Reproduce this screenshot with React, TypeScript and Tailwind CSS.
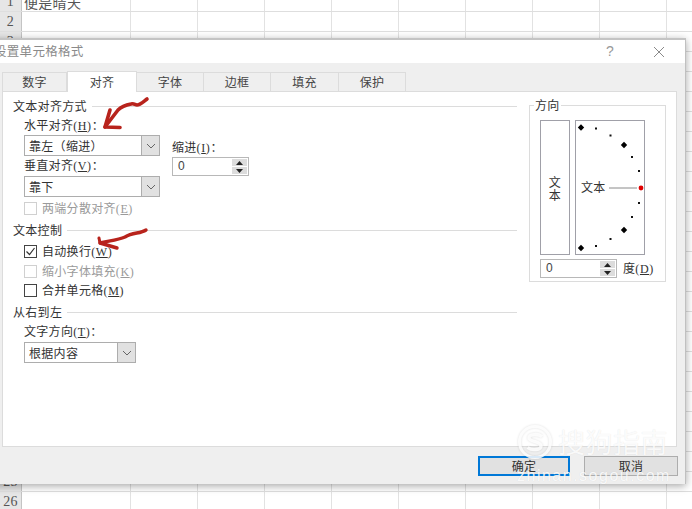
import React from "react";

const font = '"Noto Sans CJK SC","Liberation Sans",sans-serif';
const cols = [109, 67, 67, 67, 67, 67, 67, 67, 67, 67];

function Key({ k }: { k: string }) {
  return (
    <span className="font-['Liberation_Serif'] text-[12px] tracking-[0.6px]">
      (<span className="underline">{k}</span>)
    </span>
  );
}

function Chevron() {
  return (
    <svg width="10" height="6" viewBox="0 0 10 6" fill="none" stroke="#666" strokeWidth="1">
      <path d="M1 1l4 4 4-4" />
    </svg>
  );
}

function Select({ label, w, mt }: { label: string; w: string; mt: string }) {
  return (
    <div className={`${w} ${mt} h-[21px] flex border border-[#adadad] bg-white`}>
      <div className="flex-1 pl-[4px] leading-[19px]">{label}</div>
      <div className="w-[18px] flex items-center justify-center bg-[#e1e1e1] border-l border-[#adadad]">
        <Chevron />
      </div>
    </div>
  );
}

function Spin({ w }: { w: string }) {
  return (
    <div className={`${w} h-[19px] flex border border-[#b8b8b8] bg-white`}>
      <div className="flex-1 pl-[5px] leading-[17px] text-[#444] font-['Liberation_Sans']">0</div>
      <div className="w-[17px] flex flex-col gap-px bg-white p-px">
        <div className="flex-1 bg-[#dcdcdc] flex items-center justify-center">
          <svg width="7" height="4" viewBox="0 0 7 4"><path d="M3.5 0L7 4H0z" fill="#222" /></svg>
        </div>
        <div className="flex-1 bg-[#dcdcdc] flex items-center justify-center">
          <svg width="7" height="4" viewBox="0 0 7 4"><path d="M0 0h7L3.5 4z" fill="#222" /></svg>
        </div>
      </div>
    </div>
  );
}

function Check({ label, k, state, mt }: { label: string; k: string; state: "on" | "off" | "dis"; mt: string }) {
  return (
    <div className={`flex items-center h-[14px] ${mt} ${state === "dis" ? "text-[#9a9a9a]" : ""}`}>
      <div
        className={`w-[13px] h-[13px] border flex items-center justify-center bg-white ${
          state === "dis" ? "border-[#d0d0d0]" : "border-[#444]"
        }`}
      >
        {state === "on" && (
          <svg width="11" height="11" viewBox="0 0 11 11" fill="none" stroke="#333" strokeWidth="1.2">
            <path d="M1.5 5.5l3 3 5-6.5" />
          </svg>
        )}
      </div>
      <div className="ml-[5px] whitespace-nowrap">
        {label}
        <Key k={k} />
      </div>
    </div>
  );
}

function Section({ title, mt }: { title: string; mt: string }) {
  return (
    <div className={`flex items-center h-[16px] ${mt}`}>
      <span className="whitespace-nowrap">{title}</span>
      <div className="flex-1 ml-[5px] h-px bg-[#dcdcdc]" />
    </div>
  );
}

const big: [number, number][] = [[6, 7.5], [49, 25], [49, 110], [6, 128]];
const small: [number, number][] = [
  [21, 8.5], [35.5, 15.5], [57, 37], [64, 51], [64, 83], [57, 97], [35.5, 119], [21, 126],
];

export default function App() {
  return (
    <div
      className="relative w-[692px] h-[509px] overflow-hidden bg-white text-[12px] tracking-[0.3px] text-[#333]"
      style={{ fontFamily: font }}
    >
      {/* sheet */}
      <div className="-mt-[8px]">
        {Array.from({ length: 26 }, (_, i) => (
          <div key={i} className="flex h-[20px] border-b border-[#dedede]">
            <div className="w-[22px] shrink-0 bg-[#e6e6e6] border-r border-[#c4c4c4] text-center text-[14px] leading-[20px] text-[#555] font-['Liberation_Serif']">
              {i + 1}
            </div>
            {cols.map((w, c) => (
              <div
                key={c}
                style={{ width: w }}
                className="shrink-0 border-r border-[#e2e2e2] pl-[2px] text-[14px] leading-[20px] text-[#555] whitespace-nowrap"
              >
                {i === 0 && c === 0 ? "便是晴天" : ""}
              </div>
            ))}
          </div>
        ))}
      </div>

      {/* dialog */}
      <div className="absolute left-[-10px] top-[38px] w-[696px] h-[446px] flex flex-col bg-[#efefef] border-t-2 border-[#c4c4c4] border-r border-r-[#c0c0c0] shadow-[0_2px_8px_rgba(0,0,0,0.35)]">
        <div className="h-[23px] shrink-0 bg-white flex items-center text-[#8a8a8a] pr-[20px] pl-[4px]">
          <span className="flex-1 text-[12.5px]">设置单元格格式</span>
          <span className="text-[14px] text-[#999] mr-[39px] font-['Liberation_Sans']">?</span>
          <svg width="12" height="12" viewBox="0 0 12 12" stroke="#8a8a8a" strokeWidth="1">
            <path d="M1 1l10 10M11 1L1 11" />
          </svg>
        </div>

        {/* tabs */}
        <div className="flex h-[20px] mt-[8px] ml-[12px] items-end text-[#444] text-center relative z-10">
          <div className="w-[65px] h-[19px] border-t border-r border-l border-[#dcdcdc] leading-[18px] bg-[#efefef]">数字</div>
          <div className="w-[70px] h-[21px] -mb-px border-t border-x border-[#dcdcdc] leading-[20px] bg-white">对齐</div>
          <div className="w-[67px] h-[19px] border-t border-r border-[#dcdcdc] leading-[18px]">字体</div>
          <div className="w-[67px] h-[19px] border-t border-r border-[#dcdcdc] leading-[18px]">边框</div>
          <div className="w-[68px] h-[19px] border-t border-r border-[#dcdcdc] leading-[18px]">填充</div>
          <div className="w-[67px] h-[19px] border-t border-r border-[#dcdcdc] leading-[18px]">保护</div>
        </div>

        {/* page */}
        <div className="ml-[12px] w-[675px] h-[356px] bg-white border border-[#dcdcdc] flex pl-[10px]">
          <div className="w-[504px] shrink-0 pt-[6px]">
            <Section title="文本对齐方式" mt="" />
            <div className="pl-[11px]">
              <div className="mt-[2px] h-[18px] leading-[18px]">水平对齐<Key k="H" />：</div>
              <div className="flex">
                <div>
                  <Select label="靠左（缩进）" w="w-[136px]" mt="mt-[1px]" />
                  <div className="h-[20px] leading-[18px]">垂直对齐<Key k="V" />：</div>
                  <Select label="靠下" w="w-[136px]" mt="" />
                </div>
                <div className="ml-[12px]">
                  <div className="mt-[3px] h-[20px] leading-[19px]">缩进<Key k="I" />：</div>
                  <Spin w="w-[77px]" />
                </div>
              </div>
              <Check label="两端分散对齐" k="E" state="dis" mt="mt-[4px]" />
            </div>
            <Section title="文本控制" mt="mt-[7px]" />
            <div className="pl-[11px]">
              <Check label="自动换行" k="W" state="on" mt="mt-[6px]" />
              <Check label="缩小字体填充" k="K" state="dis" mt="mt-[6px]" />
              <Check label="合并单元格" k="M" state="off" mt="mt-[5px]" />
            </div>
            <Section title="从右到左" mt="mt-[7px]" />
            <div className="pl-[11px]">
              <div className="mt-[2px] h-[18px] leading-[18px]">文字方向<Key k="T" />：</div>
              <Select label="根据内容" w="w-[112px]" mt="mt-[2px]" />
            </div>
          </div>

          {/* direction */}
          <div className="ml-[12px] w-[137px] h-[177px] mt-[13px] border border-[#dcdcdc] relative px-[10px] pt-[14px]">
            <span className="absolute left-[4px] -top-[9px] bg-white px-[1px] leading-[16px]">方向</span>
            <div className="flex gap-[5px]">
              <div className="w-[30px] h-[135px] border border-[#a0a0a8] flex items-center justify-center text-center leading-[13px]">
                文<br />本
              </div>
              <div className="w-[70px] h-[135px] border border-[#a0a0a8] relative">
                <svg width="70" height="135" className="absolute -left-px -top-px">
                  {big.map(([x, y], i) => (
                    <path key={i} d={`M${x} ${y - 3.2}L${x + 3.2} ${y}L${x} ${y + 3.2}L${x - 3.2} ${y}z`} fill="#000" />
                  ))}
                  {small.map(([x, y], i) => (
                    <rect key={i} x={x - 1} y={y - 1} width="2" height="2" fill="#111" />
                  ))}
                  <line x1="34" y1="68" x2="62" y2="68" stroke="#8a8a8a" strokeWidth="1" />
                  <circle cx="66" cy="68" r="2.4" fill="#e00000" />
                </svg>
                <span className="absolute left-[5px] top-[58px] leading-[16px]">文本</span>
              </div>
            </div>
            <div className="flex mt-[4px] items-center">
              <Spin w="w-[77px]" />
              <span className="ml-[6px] whitespace-nowrap">度<Key k="D" /></span>
            </div>
          </div>
        </div>

        {/* buttons */}
        <div className="flex mt-[9px] ml-[488px]">
          <div className="w-[92px] h-[20px] border-2 border-[#0078d7] bg-[#e1e1e1] text-center leading-[16px] text-[#333]">确定</div>
          <div className="w-[94px] h-[20px] ml-[14px] border border-[#adadad] bg-[#e1e1e1] text-center leading-[18px] text-[#333]">取消</div>
        </div>
      </div>

      {/* red marks */}
      <svg className="absolute left-0 top-0 pointer-events-none" width="692" height="509" fill="none" stroke="#b8231c" strokeLinecap="round" strokeLinejoin="round">
        <path d="M147 99C143 102 140 105 137 105C135 105 134 103 131 104C126 105 121 107 118 110L105 127" strokeWidth="3.6" />
        <path d="M110 110L105 127L120 127.5" strokeWidth="3.6" />
        <path d="M146 230C140 234 133 232 125 237C118 240 108 241 100 243L117 248" strokeWidth="3.4" />
        <path d="M100 243L99 238" strokeWidth="3" />
      </svg>

      {/* watermark */}
      <div className="absolute left-[517px] top-[424px] w-[160px] text-white/85 pointer-events-none [text-shadow:0_0_1px_rgba(0,0,0,0.12)]">
        <div className="flex items-center">
          <svg width="36" height="36" viewBox="0 0 36 36" fill="none" stroke="currentColor" className="shrink-0 drop-shadow-[0_0_1px_rgba(0,0,0,0.15)]">
            <circle cx="18" cy="18" r="15.5" strokeWidth="3" />
            <path d="M25 12.5C21 9.5 12 10 12 14C12 18 24 17 24 22C24 26 15 27 10.5 23.5" strokeWidth="3.4" />
          </svg>
          <span className="ml-[5px] text-[27px] leading-[36px] tracking-[0.5px] whitespace-nowrap">搜狗指南</span>
        </div>
        <div className="mt-[8px] text-[16px] leading-[16px] tracking-[1.5px] whitespace-nowrap font-['Liberation_Sans']">zhinan.sogou.com</div>
      </div>
    </div>
  );
}
